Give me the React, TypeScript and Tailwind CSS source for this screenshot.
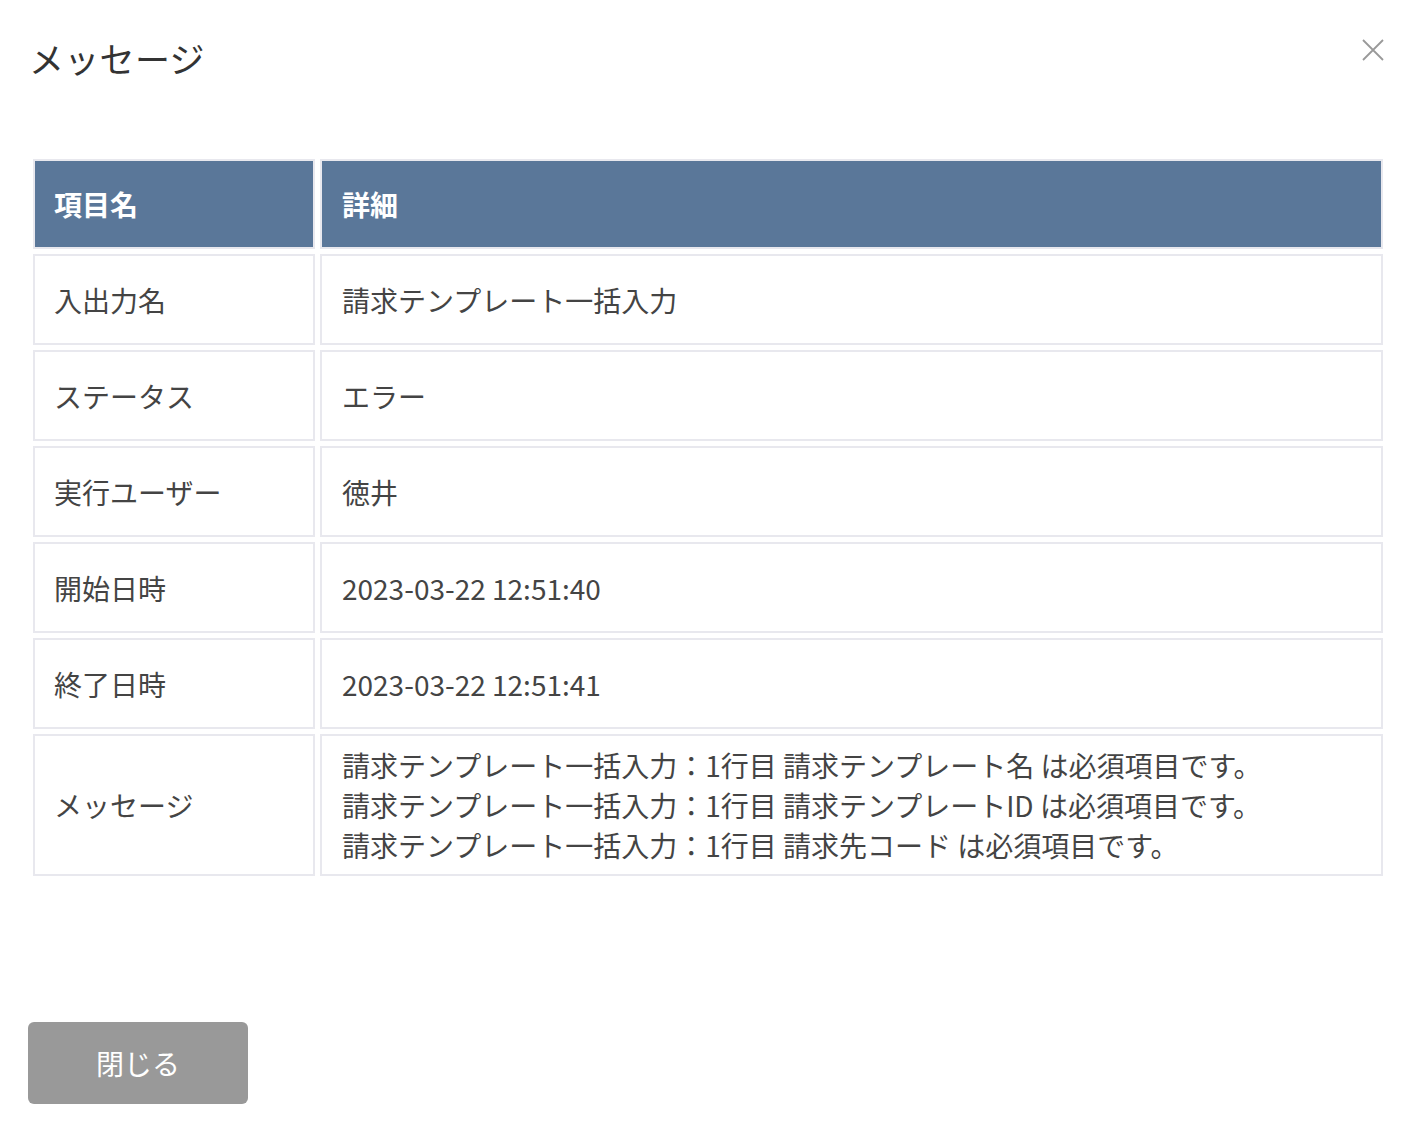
const rows: { label: string; value: string[] }[] = [
  { label: "入出力名", value: ["請求テンプレート一括入力"] },
  { label: "ステータス", value: ["エラー"] },
  { label: "実行ユーザー", value: ["徳井"] },
  { label: "開始日時", value: ["2023-03-22 12:51:40"] },
  { label: "終了日時", value: ["2023-03-22 12:51:41"] },
  {
    label: "メッセージ",
    value: [
      "請求テンプレート一括入力：1行目 請求テンプレート名 は必須項目です。",
      "請求テンプレート一括入力：1行目 請求テンプレートID は必須項目です。",
      "請求テンプレート一括入力：1行目 請求先コード は必須項目です。",
    ],
  },
];

export default function App() {
  return (
    <div
      className="relative flex h-[1132px] w-[1426px] flex-col bg-white text-[#333]"
      style={{ fontFamily: '"Noto Sans CJK JP", "Noto Sans", sans-serif' }}
    >
      {/* Header */}
      <div className="flex items-start justify-between pl-[29px] pr-[42px] pt-[34px]">
        <h2 className="text-[35px] leading-[48px] font-normal tracking-[0.3px] text-[#333]">
          メッセージ
        </h2>
        <button className="mt-[5px] text-[#999]" aria-label="close">
          <svg width="22" height="22" viewBox="0 0 22 22" fill="none">
            <path d="M1 1L21 21M21 1L1 21" stroke="#999" strokeWidth="1.8" />
          </svg>
        </button>
      </div>

      {/* Table */}
      <div className="mt-[72px] pl-[28px] pr-[38px]">
        <table className="w-full border-separate border-spacing-[5px] text-[28px] leading-[40px]">
          <thead>
            <tr>
              <th className="h-[90px] w-[282px] border-2 border-[#e8e8ee] bg-[#5a7799] pl-[19px] text-left font-bold text-white">
                項目名
              </th>
              <th className="h-[90px] border-2 border-[#e8e8ee] bg-[#5a7799] pl-[20px] text-left font-bold text-white">
                詳細
              </th>
            </tr>
          </thead>
          <tbody>
            {rows.map((r) => (
              <tr key={r.label}>
                <td className="h-[91px] border-2 border-[#e8e8ee] pl-[19px] text-[#444]">
                  {r.label}
                </td>
                <td className="h-[91px] border-2 border-[#e8e8ee] py-[9px] pl-[20px] text-[#444]">
                  {r.value.map((v) => (
                    <div key={v}>{v}</div>
                  ))}
                </td>
              </tr>
            ))}
          </tbody>
        </table>
      </div>

      {/* Footer */}
      <div className="mt-auto pb-[28px] pl-[28px]">
        <button className="flex h-[82px] w-[220px] items-center justify-center rounded-[6px] bg-[#999] text-[28px] text-white">
          閉じる
        </button>
      </div>
    </div>
  );
}
